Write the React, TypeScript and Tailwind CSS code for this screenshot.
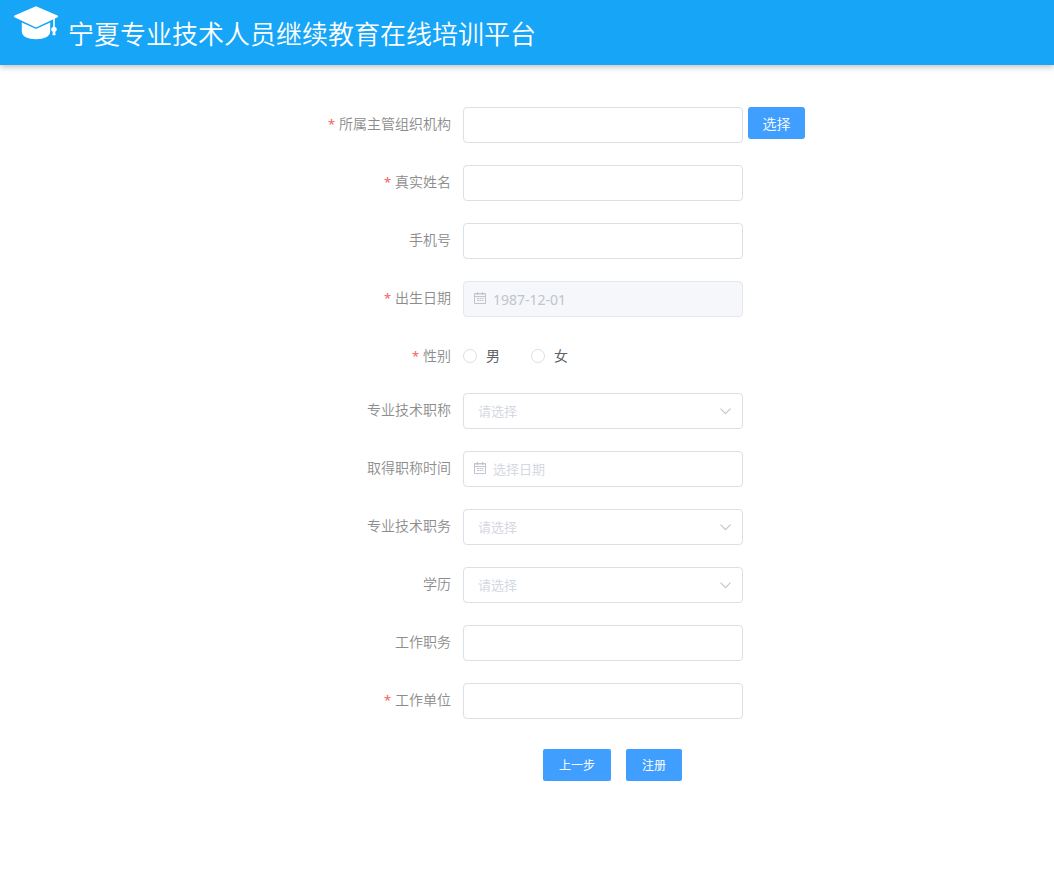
import React, { useState } from 'react'

const inputClass =
  'h-9 w-[280px] shrink-0 rounded border border-[#dcdfe6] bg-white text-[13px] text-[#606266] outline-none placeholder:text-[#d5d8df] focus:border-[#409eff]'

const LogoIcon = () => (
  <svg width="46" height="36" viewBox="0 0 46 36" fill="#fff" aria-hidden="true">
    <path d="M23 0.3 L44.5 9.6 Q45.8 10.4 44.5 11.3 L23 21.5 L1.5 11.3 Q0.2 10.4 1.5 9.6 Z" />
    <path d="M8.8 16.4 L23 22.9 L37.2 16.4 V25.5 C37.2 30.5 31 33.2 23 33.2 C15 33.2 8.8 30.5 8.8 25.5 Z" />
    <path d="M40.2 12 H41.8 V20.8 C44.4 22 44.4 24.8 42.2 25.8 L42.6 29.2 H39.4 L39.8 25.8 C37.6 24.8 37.6 22 40.2 20.8 Z" />
  </svg>
)

const CalendarIcon = () => (
  <svg width="12" height="12" viewBox="0 0 12 12" fill="none" stroke="#c0c4cc" aria-hidden="true">
    <path d="M0.5 1.5 H11.5 V11.5 H0.5 Z M0.5 4.5 H11.5" />
    <path d="M1 2.5 H11" strokeOpacity="0.4" />
    <path d="M3.5 0 V3 M8.5 0 V3" />
    <path d="M3 6.5 H5 M5.5 6.5 H7 M7.5 6.5 H9.5 M3 8.5 H5 M5.5 8.5 H7 M7.5 8.5 H9.5" />
  </svg>
)

const ArrowIcon = () => (
  <svg width="12" height="8" viewBox="0 0 12 8" fill="none" stroke="#c0c4cc" strokeWidth="1.1" aria-hidden="true">
    <path d="M0.5 1.7 L5.5 6.7 L10.5 1.7" />
  </svg>
)

type ItemProps = {
  label: string
  htmlFor: string
  required?: boolean
  children: React.ReactNode
}

const FormItem = ({ label, htmlFor, required, children }: ItemProps) => (
  <div className="flex">
    <label htmlFor={htmlFor} className="w-[150px] shrink-0 pr-3 text-right text-sm leading-[34px] font-[350] text-[#8c8c8c]">
      {required && <span className="mr-1 text-[13px] font-medium text-[#f56c6c]">*</span>}
      {label}
    </label>
    {children}
  </div>
)

const SelectBox = ({ id, options }: { id: string; options: string[] }) => (
  <div className="relative">
    <select id={id} required defaultValue="" className={`${inputClass} appearance-none px-3.5 pt-0.5 invalid:text-[#d5d8df]`}>
      <option value="" disabled>请选择</option>
      {options.map((option) => (
        <option key={option}>{option}</option>
      ))}
    </select>
    <span className="pointer-events-none absolute inset-y-0 right-[11px] flex items-center">
      <ArrowIcon />
    </span>
  </div>
)

type DateBoxProps = {
  id: string
  value?: string
  disabled?: boolean
}

const DateBox = ({ id, value, disabled }: DateBoxProps) => (
  <div className="relative">
    <input
      id={id}
      type="text"
      defaultValue={value}
      disabled={disabled}
      placeholder="选择日期"
      className={`${inputClass} pr-3 pl-[29px] disabled:border-[#e4e7ed] disabled:bg-[#f5f7fa] disabled:text-sm disabled:text-[#c0c4cc]`}
    />
    <span className="pointer-events-none absolute top-[11px] left-[11px]">
      <CalendarIcon />
    </span>
  </div>
)

const App = () => {
  const [gender, setGender] = useState('')

  return (
    <div className="min-h-screen bg-white font-['Noto_Sans','Noto_Sans_CJK_SC',sans-serif]">
      <header className="flex h-[65px] items-start bg-[#17a5f8] pl-[13px] shadow-[0_2px_6px_rgba(0,0,0,0.25)]">
        <div className="pt-1.5">
          <LogoIcon />
        </div>
        <h1 className="ml-[9px] text-[26px] leading-[68px] font-[350] whitespace-nowrap text-white">
          宁夏专业技术人员继续教育在线培训平台
        </h1>
      </header>

      <form className="mx-auto mt-[42px] flex w-[428px] flex-col gap-[22px]" onSubmit={(e) => e.preventDefault()}>
        <FormItem label="所属主管组织机构" htmlFor="org" required>
          <input id="org" type="text" className={`${inputClass} px-[15px]`} />
          <button type="button" className="ml-[5px] h-8 w-[57px] shrink-0 rounded-[3px] bg-[#409eff] pt-px text-sm font-[350] text-white">
            选择
          </button>
        </FormItem>
        <FormItem label="真实姓名" htmlFor="name" required>
          <input id="name" type="text" className={`${inputClass} px-[15px]`} />
        </FormItem>
        <FormItem label="手机号" htmlFor="phone">
          <input id="phone" type="text" className={`${inputClass} px-[15px]`} />
        </FormItem>
        <FormItem label="出生日期" htmlFor="birthday" required>
          <DateBox id="birthday" value="1987-12-01" disabled />
        </FormItem>

        <div className="flex h-8 items-start" role="radiogroup" aria-labelledby="gender-label">
          <span id="gender-label" className="w-[150px] shrink-0 pr-3 text-right text-sm leading-[34px] font-[350] text-[#8c8c8c]">
            <span className="mr-1 text-[13px] font-medium text-[#f56c6c]">*</span>
            性别
          </span>
          <div className="flex gap-[31px]">
            {['男', '女'].map((item) => (
              <label key={item} className="flex items-center gap-[9px] text-sm leading-[34px] text-[#606266]">
                <input
                  type="radio"
                  name="gender"
                  value={item}
                  checked={gender === item}
                  onChange={() => setGender(item)}
                  className="size-3.5 appearance-none rounded-full border border-[#dcdfe6] bg-white checked:border-4 checked:border-[#409eff]"
                />
                {item}
              </label>
            ))}
          </div>
        </div>

        <FormItem label="专业技术职称" htmlFor="title">
          <SelectBox id="title" options={['初级', '中级', '副高级', '正高级']} />
        </FormItem>
        <FormItem label="取得职称时间" htmlFor="title-date">
          <DateBox id="title-date" />
        </FormItem>
        <FormItem label="专业技术职务" htmlFor="post">
          <SelectBox id="post" options={['初级', '中级', '副高级', '正高级']} />
        </FormItem>
        <FormItem label="学历" htmlFor="education">
          <SelectBox id="education" options={['专科', '本科', '硕士', '博士']} />
        </FormItem>
        <FormItem label="工作职务" htmlFor="job">
          <input id="job" type="text" className={`${inputClass} px-[15px]`} />
        </FormItem>
        <FormItem label="工作单位" htmlFor="company" required>
          <input id="company" type="text" className={`${inputClass} px-[15px]`} />
        </FormItem>

        <div className="flex gap-[15px] pt-2 pl-[230px]">
          <button type="button" className="h-8 shrink-0 rounded-[2px] bg-[#409eff] px-4 pt-0.5 text-xs text-white">
            上一步
          </button>
          <button type="submit" className="h-8 shrink-0 rounded-[2px] bg-[#409eff] px-4 pt-0.5 text-xs text-white">
            注册
          </button>
        </div>
      </form>
    </div>
  )
}

export default App
